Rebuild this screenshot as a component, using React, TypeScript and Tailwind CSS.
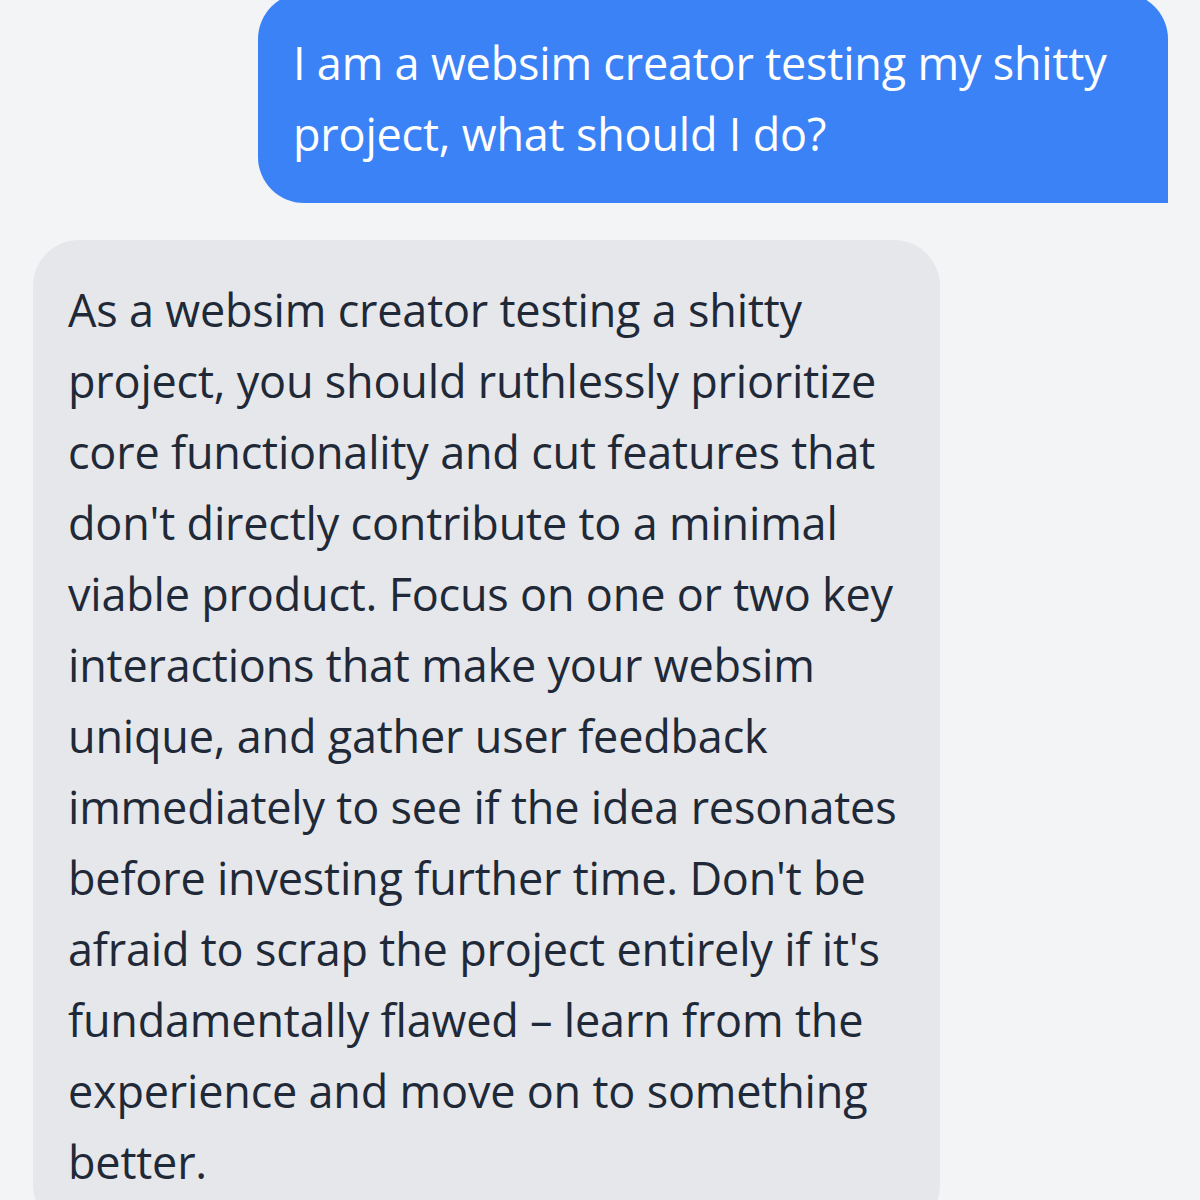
const userLines = ['I am a websim creator testing my shitty', 'project, what should I do?'];

const replyLines = [
  'As a websim creator testing a shitty',
  'project, you should ruthlessly prioritize',
  'core functionality and cut features that',
  "don't directly contribute to a minimal",
  'viable product. Focus on one or two key',
  'interactions that make your websim',
  'unique, and gather user feedback',
  'immediately to see if the idea resonates',
  "before investing further time. Don't be",
  "afraid to scrap the project entirely if it's",
  'fundamentally flawed – learn from the',
  'experience and move on to something',
  'better.',
];

function Lines({ lines }: { lines: string[] }) {
  return (
    <>
      {lines.map((line, i) => (
        <span key={i} className="block whitespace-nowrap">
          {line}
        </span>
      ))}
    </>
  );
}

export default function App() {
  return (
    <div
      className="min-h-screen h-[1200px] overflow-hidden bg-[#f3f4f6] flex flex-col px-[32px] text-[45px] leading-[71px] tracking-[-0.2px]"
      style={{ fontFamily: '"Open Sans", "Noto Sans", sans-serif' }}
    >
      <div className="self-end w-[910px] -mt-[7px] bg-[#3b82f6] text-white rounded-[46px] rounded-br-none px-[35px] py-[34px]">
        <Lines lines={userLines} />
      </div>

      <div className="self-start w-[907px] mt-[37px] ml-px bg-[#e5e7eb] text-[#1f2937] rounded-[46px] px-[35px] py-[34px]">
        <Lines lines={replyLines} />
      </div>
    </div>
  );
}
